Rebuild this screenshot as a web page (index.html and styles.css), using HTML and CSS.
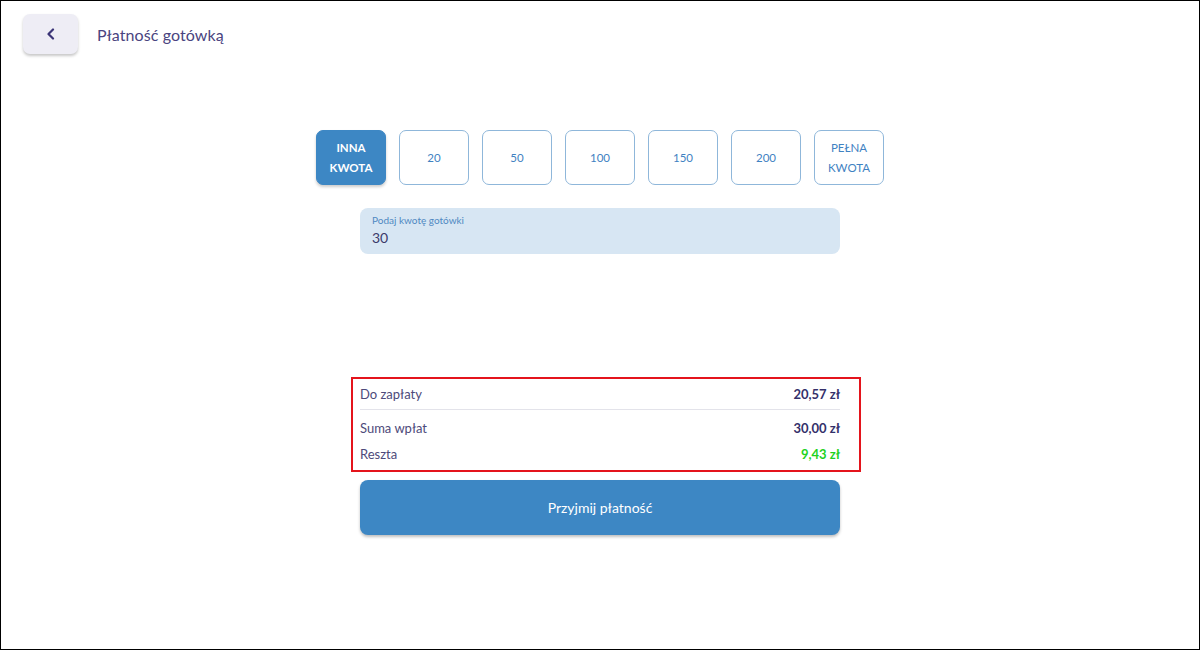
FILE: index.html
```html
<!DOCTYPE html>
<html lang="pl">
<head>
<meta charset="utf-8">
<title>Płatność gotówką</title>
<link rel="stylesheet" href="styles.css">
</head>
<body>
<div class="frame">
  <header class="topbar">
    <button class="back" aria-label="Wstecz">
      <svg width="10" height="12" viewBox="0 0 10 12"><path d="M7 1.5 L2.5 6 L7 10.5" fill="none" stroke="#3b3477" stroke-width="2.2" stroke-linecap="round" stroke-linejoin="round"/></svg>
    </button>
    <h1 class="title">Płatność gotówką</h1>
  </header>
  <main class="content">
    <div class="amounts">
      <button class="amt active">INNA<br>KWOTA</button>
      <button class="amt">20</button>
      <button class="amt">50</button>
      <button class="amt">100</button>
      <button class="amt">150</button>
      <button class="amt">200</button>
      <button class="amt">PEŁNA<br>KWOTA</button>
    </div>
    <div class="field">
      <span class="field-label">Podaj kwotę gotówki</span>
      <span class="field-value">30</span>
    </div>
    <section class="summary">
      <div class="row first"><span>Do zapłaty</span><b>20,57 zł</b></div>
      <div class="row"><span>Suma wpłat</span><b>30,00 zł</b></div>
      <div class="row"><span>Reszta</span><b class="green">9,43 zł</b></div>
    </section>
    <button class="accept">Przyjmij płatność</button>
  </main>
</div>
</body>
</html>
```
FILE: styles.css
```css
* { box-sizing: border-box; }
html, body { margin: 0; padding: 0; background: #fff; }
body { font-family: "Lato", "Noto Sans", sans-serif; color: #4a4480; }
.frame {
  width: 1200px; height: 650px;
  border: 1px solid #000;
  overflow: hidden;
}
.topbar {
  display: flex; align-items: center;
  padding: 13px 0 0 22px;
  gap: 19px;
}
.back {
  width: 55px; height: 40px;
  border: none; border-radius: 7px;
  background: #eeedf5;
  box-shadow: 0 2px 3px rgba(0,0,0,0.22);
  display: flex; align-items: center; justify-content: center;
  padding: 0;
}
.title {
  margin: 0; font-size: 16px; font-weight: 400;
  color: #4a4480; letter-spacing: 0.1px;
}
.content {
  display: flex; flex-direction: column; align-items: center;
  padding-top: 76px;
}
.amounts { display: flex; gap: 13px; }
.amt {
  width: 70px; height: 55px;
  border: 1px solid #8fb7da; border-radius: 7px;
  background: #fff; color: #3f82c2;
  font-family: inherit; font-size: 11.5px; line-height: 20px;
  padding: 0;
}
.amt.active {
  background: #3d87c4; border-color: #3d87c4; color: #fff; font-weight: 700;
  box-shadow: 0 2px 3px rgba(0,0,0,0.2);
}
.field {
  margin-top: 23px;
  width: 480px; height: 46px;
  background: #d7e6f3; border-radius: 8px;
  padding: 6px 12px 0;
  display: flex; flex-direction: column;
}
.field-label { font-size: 10px; color: #4f89c2; line-height: 12px; }
.field-value { font-size: 14px; color: #3b3a6a; margin-top: 4px; line-height: 16px; }
.summary {
  margin-top: 123px;
  margin-left: 12px;
  width: 510px;
  border: 2px solid #e4141c;
  padding: 0 19px 3px 7px;
}
.row {
  display: flex; justify-content: space-between; align-items: center;
  height: 26px; font-size: 13px; color: #4d4a7a;
}
.row.first {
  height: 31px;
  border-bottom: 1px solid #e3e3ea;
  margin-bottom: 5px;
}
.row b { font-weight: 700; color: #34306a; font-size: 13px; }
.row b.green { color: #1ed21e; }
.accept {
  margin-top: 8px;
  width: 480px; height: 55px;
  border: none; border-radius: 8px;
  background: #3d87c4; color: #fff;
  font-family: inherit; font-size: 14px;
  box-shadow: 0 2px 3px rgba(0,0,0,0.25);
}
```
